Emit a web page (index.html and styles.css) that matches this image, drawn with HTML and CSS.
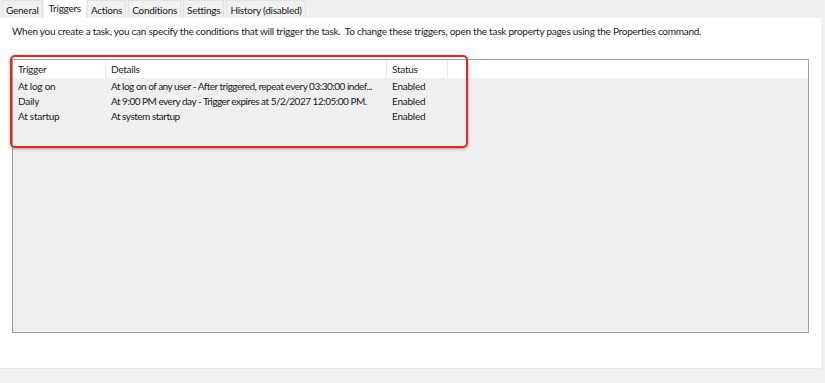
FILE: index.html
```html
<!DOCTYPE html>
<html lang="en">
<head>
  <meta charset="UTF-8">
  <title>Task Properties - Triggers</title>
  <link rel="stylesheet" href="styles.css">
</head>
<body>
  <div class="window">
    <nav class="tabs">
      <div class="tab">General</div>
      <div class="tab active">Triggers</div>
      <div class="tab">Actions</div>
      <div class="tab">Conditions</div>
      <div class="tab">Settings</div>
      <div class="tab">History (disabled)</div>
    </nav>

    <main class="page">
      <p class="intro">When you create a task, you can specify the conditions that will trigger the task.&nbsp; To change these triggers, open the task property pages using the Properties command.</p>

      <div class="list">
        <div class="list-head">
          <div class="col col-trigger">Trigger</div>
          <div class="col col-details">Details</div>
          <div class="col col-status">Status</div>
          <div class="col col-fill"></div>
        </div>
        <div class="list-body">
          <div class="row">
            <div class="col col-trigger">At log on</div>
            <div class="col col-details">At log on of any user - After triggered, repeat every 03:30:00 indef...</div>
            <div class="col col-status">Enabled</div>
          </div>
          <div class="row">
            <div class="col col-trigger">Daily</div>
            <div class="col col-details">At 9:00 PM every day - Trigger expires at 5/2/2027 12:05:00 PM.</div>
            <div class="col col-status">Enabled</div>
          </div>
          <div class="row">
            <div class="col col-trigger">At startup</div>
            <div class="col col-details">At system startup</div>
            <div class="col col-status">Enabled</div>
          </div>
        </div>
      </div>

      <div class="highlight"></div>
    </main>
  </div>
</body>
</html>
```

FILE: styles.css
```css
* {
  margin: 0;
  padding: 0;
  box-sizing: border-box;
}

body {
  font-family: 'Lato', 'Open Sans', sans-serif;
  font-size: 10px;
  letter-spacing: -0.25px;
  color: #1a1a1a;
  background-color: #f0f0f0;
  width: 825px;
  height: 383px;
  overflow: hidden;
}

.window {
  width: 821px;
  height: 369px;
  background-color: #fff;
  border-bottom: 1px solid #e6e6e6;
}

.tabs {
  display: flex;
  height: 18px;
  padding-left: 2px;
  background-color: #efefef;
  gap: 2px;
}

.tab {
  height: 18px;
  padding: 2px 3px 0;
  line-height: 15px;
  border: 1px solid #e2e2e2;
  border-bottom: none;
  background-color: #f0f0f0;
  white-space: nowrap;
}

.tab.active {
  background-color: #fff;
  border-color: #fff;
  padding-top: 0;
  margin: 0 -1px;
  padding-left: 4px;
  padding-right: 4px;
}

.page {
  position: relative;
  padding: 6px 12px 0;
}

.intro {
  line-height: 15px;
  margin-bottom: 20px;
  white-space: nowrap;
}

.list {
  width: 797px;
  height: 274px;
  border: 1px solid #a0a0a0;
  background-color: #efefef;
}

.list-head {
  display: flex;
  height: 18px;
  background-color: #fff;
}

.list-head .col {
  line-height: 18px;
  border-right: 1px solid #e8e8e8;
}

.list-head .col-fill {
  flex: 1;
  border-right: none;
}

.list-body {
  padding-top: 1px;
}

.row {
  display: flex;
  height: 15px;
  line-height: 15px;
}

.col {
  padding-left: 5px;
  white-space: nowrap;
  overflow: hidden;
}

.col-trigger {
  width: 93px;
}

.col-details {
  width: 281px;
}

.row .col-details {
  letter-spacing: -0.5px;
}

.col-status {
  width: 61px;
}

.highlight {
  position: absolute;
  left: 10px;
  top: 37px;
  width: 458px;
  height: 93px;
  border: 2px solid #ec2027;
  border-radius: 5px;
  box-shadow: 0 1px 3px rgba(0, 0, 0, 0.35);
}
```
